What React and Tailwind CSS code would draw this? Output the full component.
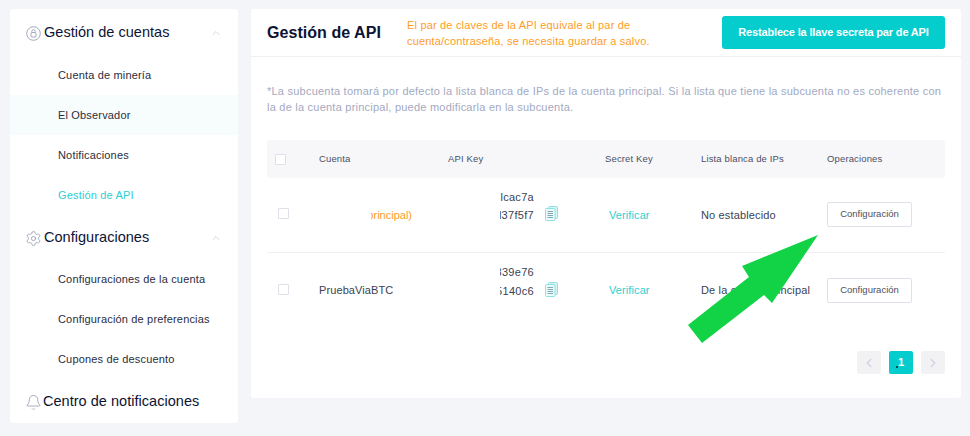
import { ChevronUp, ChevronLeft, ChevronRight, Settings, Bell } from 'lucide-react'

const font = { fontFamily: '"Liberation Sans", Arial, sans-serif' }

function SideHead({ icon, label, open, className, textClass = 'ml-[3px]' }) {
  return (
    <div className={`flex items-center pl-[15px] pr-[16px] pt-[2px] ${className}`}>
      <span className="w-[16px] h-[16px] flex items-center justify-center text-[#8f97ad]">{icon}</span>
      <span className={`${textClass} text-[14.5px] tracking-[0.03px] text-[#0d1333]`}>{label}</span>
      {open && <ChevronUp className="ml-auto w-[12px] h-[12px] text-[#c4c8d4]" strokeWidth={1.5} />}
    </div>
  )
}

function SideItem({ label, active, hover }) {
  return (
    <div
      className={`h-[40px] flex items-center pl-[48px] text-[11px] tracking-[0.17px] ${
        active ? 'text-[#2ccfd3]' : 'text-[#2a2d3e]'
      } ${hover ? 'bg-[#f7fdfd]' : ''}`}
    >
      {label}
    </div>
  )
}

function CopyIcon() {
  return (
    <svg width="13" height="15" viewBox="0 0 13 15" fill="none" className="shrink-0">
      <rect x="3.5" y="0.5" width="9" height="12" rx="1" fill="#d7f4f5" stroke="#8fe0e3" />
      <rect x="0.5" y="2.5" width="9.5" height="12" rx="1" fill="#ecfafa" stroke="#8fe0e3" />
      <path d="M2.5 5.5h5.5M2.5 7.5h5.5M2.5 9.5h5.5M2.5 11.5h5.5" stroke="#7fa9b4" strokeWidth="1" />
    </svg>
  )
}

function Checkbox({ className }) {
  return <span className={`block w-[11px] h-[11px] border border-[#dfe1ea] rounded-[1px] bg-white ${className}`} />
}

function Row({ account, accountClass, keys, ip, last }) {
  return (
    <div
      className={`grid grid-cols-[52px_129px_157px_96px_126px_1fr] items-center h-[75px] text-[11px] text-[#3b3f52] ${
        last ? '' : 'border-b border-[#eeeff3]'
      }`}
    >
      <Checkbox className="ml-[11px] -mt-[3px]" />
      <div className={accountClass}>{account}</div>
      <div className="flex items-center pl-[52px] -mt-[18px]">
        <div className="w-[34px] overflow-hidden flex flex-col items-end leading-[18.5px] tracking-[0.3px] whitespace-nowrap">
          <span>{keys[0]}</span>
          <span>{keys[1]}</span>
        </div>
        <span className="ml-[11px] mt-[15px]">
          <CopyIcon />
        </span>
      </div>
      <div className="pl-[4px] text-[#2ccfd3] tracking-[0.1px]">Verificar</div>
      <div className="tracking-[0.15px] whitespace-nowrap">{ip}</div>
      <button className="w-[85px] h-[25px] -mt-[1px] border border-[#dfe1ea] rounded-[2px] bg-white text-[9.5px] text-[#4b4f63]">
        Configuración
      </button>
    </div>
  )
}

export default function App() {
  return (
    <div style={font} className="relative w-[970px] h-[436px] overflow-hidden bg-[#f4f5f9] flex items-start pl-[10px] pt-[9px] gap-[13px]">
      {/* Sidebar */}
      <aside className="w-[228px] h-[414px] shrink-0 bg-white rounded-[3px]">
        <SideHead
          className="h-[46px]"
          open
          label="Gestión de cuentas"
          icon={
            <svg width="15" height="15" viewBox="0 0 15 15" fill="none">
              <circle cx="7.5" cy="7.5" r="6.8" stroke="#a3a9bc" />
              <rect x="5" y="6.5" width="5" height="4.5" rx="1" stroke="#a3a9bc" />
              <path d="M5.8 6.5V5.4a1.7 1.7 0 0 1 3.4 0v1.1" stroke="#a3a9bc" />
            </svg>
          }
        />
        <SideItem label="Cuenta de minería" />
        <SideItem label="El Observador" hover />
        <SideItem label="Notificaciones" />
        <SideItem label="Gestión de API" active />
        <SideHead
          className="h-[44px]"
          open
          label="Configuraciones"
          icon={<Settings className="w-[17px] h-[17px] shrink-0" strokeWidth={1.1} />}
        />
        <SideItem label="Configuraciones de la cuenta" />
        <SideItem label="Configuración de preferencias" />
        <SideItem label="Cupones de descuento" />
        <SideHead
          className="h-[44px]"
          textClass="ml-[2px]"
          label="Centro de notificaciones"
          icon={<Bell className="w-[17px] h-[17px] shrink-0" strokeWidth={1.1} />}
        />
      </aside>

      {/* Main */}
      <main className="w-[710px] h-[389px] shrink-0 bg-white rounded-[3px] flex flex-col">
        <header className="h-[48px] shrink-0 flex items-center border-b border-[#eeeff3] pl-[16px] pr-[16px]">
          <h1 className="w-[140px] text-[16px] font-bold text-[#0d1333] tracking-[0.05px]">Gestión de API</h1>
          <p className="text-[11px] leading-[16px] tracking-[0.18px] text-[#ff9c27] whitespace-nowrap">
            El par de claves de la API equivale al par de
            <br />
            cuenta/contraseña, se necesita guardar a salvo.
          </p>
          <button className="ml-auto w-[223px] h-[33px] rounded-[3px] bg-[#06cdcd] text-white text-[11px] font-bold tracking-[-0.16px]">
            Restablece la llave secreta par de API
          </button>
        </header>

        <div className="flex-1 px-[16px]">
          <p className="mt-[26px] text-[11px] leading-[16px] tracking-[0.23px] text-[#a3a9c2] whitespace-nowrap">
            *La subcuenta tomará por defecto la lista blanca de IPs de la cuenta principal. Si la lista que tiene la subcuenta no es coherente con
            <br />
            la de la cuenta principal, puede modificarla en la subcuenta.
          </p>

          <div className="mt-[25px] grid grid-cols-[52px_129px_157px_96px_126px_1fr] items-center h-[38px] rounded-[3px] bg-[#f7f7fa] text-[9.5px] tracking-[0.14px] text-[#4b4f63]">
            <Checkbox className="ml-[8px]" />
            <div>Cuenta</div>
            <div>API Key</div>
            <div>Secret Key</div>
            <div>Lista blanca de IPs</div>
            <div>Operaciones</div>
          </div>

          <Row
            account={<span className="block w-[41px] ml-[52px] overflow-hidden whitespace-nowrap flex justify-end">(Cuenta principal)</span>}
            accountClass="text-[#ff9c27]"
            keys={['7lcac7a', '8d37f5f7']}
            ip="No establecido"
          />
          <Row
            account="PruebaViaBTC"
            accountClass="tracking-[0.1px]"
            keys={['a839e76', '5f5140c6']}
            ip="De la cuenta principal"
            last
          />

          <div className="mt-[23px] flex justify-end gap-[8px]">
            <span className="w-[24px] h-[23px] rounded-[2px] bg-[#f2f2f4] flex items-center justify-center text-[#d0d3e4]">
              <ChevronLeft className="w-[14px] h-[14px]" strokeWidth={2.5} />
            </span>
            <span className="relative w-[24px] h-[23px] rounded-[2px] bg-[#06cdcd] flex items-center justify-center text-white text-[11px] font-bold">
              1
              <span className="absolute left-[7px] top-[15px] w-[2px] h-[2px] rounded-full bg-[#10202a]" />
            </span>
            <span className="w-[24px] h-[23px] rounded-[2px] bg-[#f2f2f4] flex items-center justify-center text-[#d0d3e4]">
              <ChevronRight className="w-[14px] h-[14px]" strokeWidth={2.5} />
            </span>
          </div>
        </div>
      </main>

      {/* Green annotation arrow over the page */}
      <svg className="absolute left-0 top-0 pointer-events-none" width="970" height="436" viewBox="0 0 970 436">
        <polygon points="818,235 772,303 764,295 702,343 688,325 749,277 742,266" fill="#12d246" />
      </svg>
    </div>
  )
}
